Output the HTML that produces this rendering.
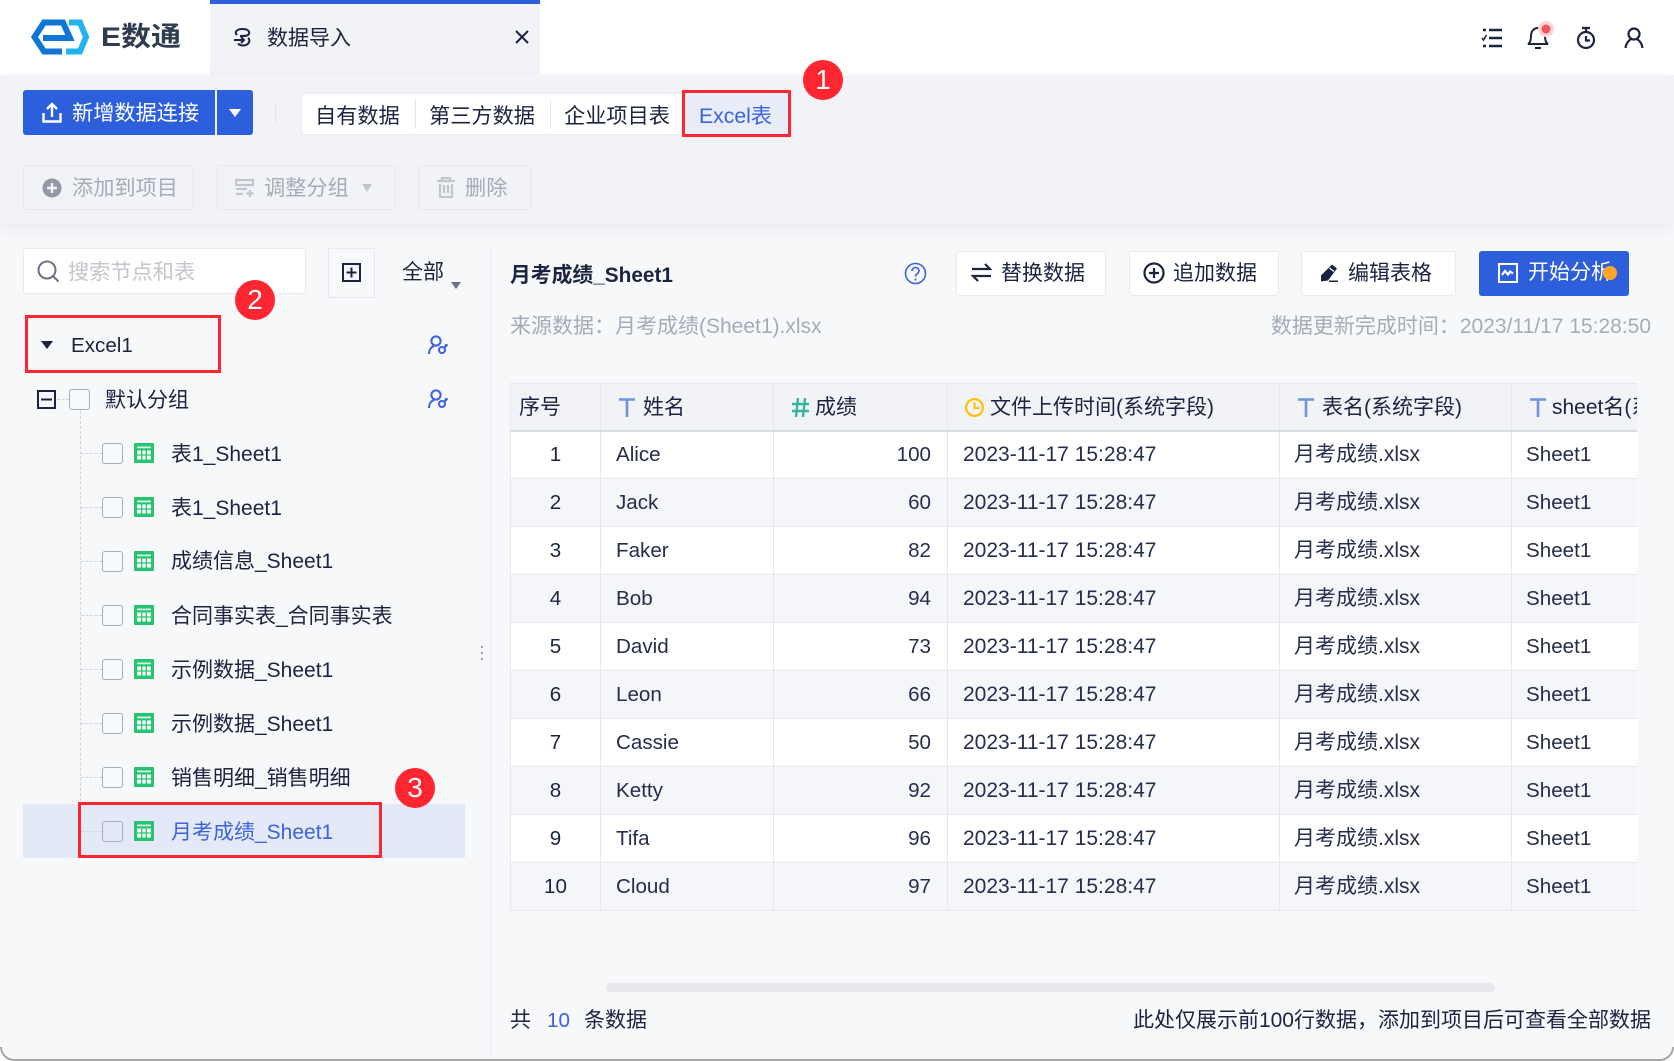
<!DOCTYPE html>
<html lang="zh-CN"><head><meta charset="utf-8"><title>数据导入</title>
<style>
*{box-sizing:border-box}
html,body{margin:0;padding:0;width:1674px;height:1061px;overflow:hidden}
body{position:relative;background:#f7f8fa;font-family:"Liberation Sans","Noto Sans CJK SC",sans-serif;font-size:21px;color:#1c2340}
.t{position:absolute;line-height:30px;white-space:nowrap}
.a{position:absolute}
.btn{position:absolute;background:#fff;border:1px solid #e8eaef;border-radius:3px}
.dis{position:absolute;background:#f2f3f7;border:1px solid #e6e8ee;border-radius:3px}
.g{color:#a6abb8}
.cb{position:absolute;width:21px;height:21px;background:#f8f9fb;border:1px solid #a9adbb;border-radius:3px;left:102px}
.gi{position:absolute;left:134px;width:20px;height:20px}
.red{position:absolute;border:3px solid #ff2631}
.c{position:absolute;width:40px;height:40px;border-radius:50%;background:#ff2631;color:#fff;text-align:center;line-height:40px;font-size:28px}
.dh{position:absolute;left:81px;width:21px;border-top:1px dashed #d0d3da}
table{border-collapse:collapse;table-layout:fixed;width:1300px;font-size:21px;line-height:30px}
td,th{border:1px solid #e6e8ee;height:48px;padding:0 14px;font-weight:normal;white-space:nowrap;overflow:hidden;text-align:left;color:#262c4d}
th{height:47px;padding-top:2px;background:#f2f3f7;color:#1c2340;border-bottom:2px solid #d9dce3}
td:first-child{text-align:center;color:#1c2340;padding:0;font-size:20.6px}
th:first-child{padding:2px 8px 0}
td:nth-child(2){padding-left:15px;font-size:20.6px}
td:nth-child(3){padding-right:16px;font-size:20.6px;text-align:right}
td:nth-child(4){padding-left:15px}
td:nth-child(6){font-size:20.6px}
tr:nth-child(odd) td{background:#fff}
tr:nth-child(even) td{background:#f5f6f9}
th svg{vertical-align:-3px}
</style></head><body>
<svg width="0" height="0" style="position:absolute"><defs>
<g id="grid"><rect width="20" height="20" rx="1" fill="#27c46f"/><rect x="3" y="3.500" width="14" height="1.800" fill="#d8f5e5"/><path d="M3 7.500h14v9H3z" fill="#fff"/><path d="M7.700 7.500v9M12.300 7.500v9M3 12h14" stroke="#27c46f" stroke-width="1.300"/></g>
<g id="pk" fill="none" stroke="#3b63dd" stroke-width="2"><circle cx="8" cy="6" r="4.600"/><path d="M1 19c0-4 2-7 5-8"/><circle cx="14" cy="15" r="3"/><path d="M16 13l3.500-3.500M17 9.500l2 2"/></g>
</defs></svg>

<!-- header -->
<div class="a" style="left:0;top:0;width:1674px;height:75px;background:#fff"></div>
<svg class="a" style="left:30px;top:19px" width="60" height="36" viewBox="0 0 60 36" fill="none"><path d="M32 32.500H14L4.500 18 14 3.500H33L40 19H13" stroke="#0f76d6" stroke-width="6"/><path d="M39 3.500H50L56 18 50 32.500H36" stroke="#22b3ec" stroke-width="6"/></svg>
<div class="t" style="left:101px;top:22px;font-size:27px;font-weight:bold;color:#2f3d4f;transform-origin:0 50%;transform:scaleX(1.11)">E数通</div>
<div class="a" style="left:210px;top:0;width:330px;height:75px;background:#f2f3f7;border-top:4px solid #2d5fdc"></div>
<svg class="a" style="left:233px;top:28px" width="20" height="19" viewBox="0 0 20 19" fill="none" stroke="#1c2340" stroke-width="2"><path d="M4 7C1 4 4 1 9.500 1S18 4 15 7C14 8 12 8 7 8"/><path d="M1 12h10M8 9l3 3-3 3"/><path d="M15 10c3 2 1 7.500-5 7.500-3 0-4-1-5-2"/></svg>
<div class="t" style="left:267px;top:24px">数据导入</div>
<svg class="a" style="left:515px;top:30px" width="14" height="14" viewBox="0 0 14 14" stroke="#1c2340" stroke-width="2"><path d="M1 1l12 12M13 1L1 13"/></svg>

<svg class="a" style="left:1481px;top:27px" width="22" height="22" viewBox="0 0 22 22" fill="none" stroke="#1c2340" stroke-width="2.600"><path d="M8 3h13M8 11h13M8 19h13"/><path d="M2 3h3M2 19h3"/><path d="M1 11l1.500 2L5.500 8" stroke-width="1.600"/></svg>
<svg class="a" style="left:1525px;top:20px" width="32" height="32" viewBox="0 0 32 32" fill="none" stroke="#1c2340" stroke-width="2"><path d="M3 24c2-1 3-3 3-8 0-5 3-8 7-8s7 3 7 8c0 5 1 7 3 8zM10 28h6"/><circle cx="21" cy="9" r="8" fill="#fbd5d7" stroke="none"/><circle cx="21" cy="9" r="4.500" fill="#f2545d" stroke="none"/></svg>
<svg class="a" style="left:1576px;top:26px" width="20" height="24" viewBox="0 0 20 24" fill="none" stroke="#1c2340" stroke-width="2.200"><circle cx="10" cy="14" r="8"/><path d="M6 2h8M10 2v4M10 10v4.500h4"/></svg>
<svg class="a" style="left:1624px;top:27px" width="20" height="22" viewBox="0 0 20 22" fill="none" stroke="#1c2340" stroke-width="2.200"><circle cx="10" cy="7" r="5.500"/><path d="M7 12c-3 2-5 5-5.500 9M13 12c3 2 5 5 5.500 9"/></svg>

<!-- top panel -->
<div class="a" style="left:0;top:75px;width:1674px;height:150px;background:#f2f3f7;box-shadow:0 4px 12px rgba(40,50,80,.07)"></div>
<div class="a" style="left:23px;top:90px;width:192px;height:45px;background:#2d5fdc;border-radius:3px 0 0 3px"></div>
<svg class="a" style="left:42px;top:102px" width="20" height="21" viewBox="0 0 20 21" fill="none" stroke="#fff" stroke-width="2.400"><path d="M1.500 11v8.500h17V11"/><path d="M10 15V2M5 7l5-5 5 5"/></svg>
<div class="t" style="left:72px;top:99px;color:#fff;font-size:21.200px">新增数据连接</div>
<div class="a" style="left:217px;top:90px;width:36px;height:45px;background:#2d5fdc;border-radius:0 3px 3px 0"></div>
<div class="a" style="left:229px;top:109px;width:0;height:0;border:6px solid transparent;border-top:8px solid #fff;border-bottom:0"></div>
<div class="a" style="left:275px;top:102px;width:1px;height:23px;background:#e2e4ea"></div>
<div class="a" style="left:301px;top:93px;width:489px;height:42px;background:#fff;border:1px solid #e8eaef;border-radius:3px"></div>
<div class="a" style="left:415px;top:99px;width:1px;height:30px;background:#e6e8ee"></div>
<div class="a" style="left:550px;top:99px;width:1px;height:30px;background:#e6e8ee"></div>
<div class="t" style="left:315px;top:102px;font-size:21.200px">自有数据</div>
<div class="t" style="left:429px;top:102px;font-size:21.200px">第三方数据</div>
<div class="t" style="left:564px;top:102px;font-size:21.200px">企业项目表</div>
<div class="a" style="left:684px;top:93px;width:105px;height:42px;background:#e8edf9"></div>
<div class="t" style="left:699px;top:102px;color:#3b63dd;font-size:21.200px">Excel表</div>
<div class="red" style="left:682px;top:90px;width:109px;height:47px"></div>
<div class="c" style="left:803px;top:60px">1</div>

<div class="dis" style="left:23px;top:165px;width:171px;height:45px"></div>
<svg class="a" style="left:42px;top:178px" width="20" height="20" viewBox="0 0 20 20"><circle cx="10" cy="10" r="9.500" fill="#9599a6"/><path d="M5 10h10M10 5v10" stroke="#f2f3f7" stroke-width="2.400"/></svg>
<div class="t g" style="left:72px;top:174px;font-size:21.200px">添加到项目</div>
<div class="dis" style="left:217px;top:165px;width:179px;height:45px"></div>
<svg class="a" style="left:235px;top:178px" width="19" height="20" viewBox="0 0 19 20" fill="none" stroke="#c2c5cf" stroke-width="2.200"><path d="M1 2h17v5H1zM1 11h11M1 16h7M15 12v7M11.500 15.500h7"/></svg>
<div class="t g" style="left:264px;top:174px;font-size:21.200px">调整分组</div>
<div class="a" style="left:362px;top:184px;width:0;height:0;border:5px solid transparent;border-top:8px solid #c0c3cc;border-bottom:0"></div>
<div class="dis" style="left:418px;top:165px;width:113px;height:45px"></div>
<svg class="a" style="left:437px;top:177px" width="18" height="21" viewBox="0 0 18 21" fill="none" stroke="#c2c5cf" stroke-width="2.200"><path d="M0 4h18M5 4V1h8v3M3 7v13h12V7M7 8v8M11 8v8"/></svg>
<div class="t g" style="left:465px;top:174px;font-size:21.200px">删除</div>

<!-- left pane -->
<div class="a" style="left:490px;top:248px;width:1px;height:813px;background:#ebedf1"></div>
<div class="btn" style="left:23px;top:248px;width:283px;height:46px"></div>
<svg class="a" style="left:37px;top:260px" width="23" height="23" viewBox="0 0 23 23" fill="none" stroke="#6c7283" stroke-width="2"><circle cx="10" cy="10" r="8.500"/><path d="M16 16l5.500 5.500"/></svg>
<div class="t" style="left:68px;top:258px;color:#c3c6d0;font-size:21.200px">搜索节点和表</div>
<div class="a" style="left:328px;top:248px;width:47px;height:50px;border:1px solid #e6e8ee;background:#f7f8fa"></div>
<svg class="a" style="left:342px;top:263px" width="19" height="19" viewBox="0 0 19 19" fill="none" stroke="#1c2340" stroke-width="2"><path d="M1 1h17v17H1zM4.500 9.500h10M9.500 4.500v10"/></svg>
<div class="t" style="left:402px;top:258px">全部</div>
<div class="a" style="left:451px;top:282px;width:0;height:0;border:5px solid transparent;border-top:7px solid #6c7283;border-bottom:0"></div>

<div class="a" style="left:41px;top:341px;width:0;height:0;border:6px solid transparent;border-top:8px solid #1c2340;border-bottom:0"></div>
<div class="t" style="left:71px;top:331px;font-size:20.600px">Excel1</div>
<svg class="a" style="left:428px;top:335px" width="20" height="20" viewBox="0 0 20 20"><use href="#pk"/></svg>
<div class="red" style="left:25px;top:315px;width:196px;height:58px"></div>
<div class="c" style="left:235px;top:280px">2</div>

<svg class="a" style="left:37px;top:390px" width="19" height="19" viewBox="0 0 19 19" fill="none" stroke="#1c2340" stroke-width="2"><path d="M1 1h17v17H1zM4 9.500h11"/></svg>
<div class="dh" style="left:57px;top:399px;width:12px"></div>
<div class="cb" style="left:69px;top:389px"></div>
<div class="t" style="left:105px;top:386px">默认分组</div>
<svg class="a" style="left:428px;top:389px" width="20" height="20" viewBox="0 0 20 20"><use href="#pk"/></svg>
<div class="a" style="left:80px;top:411px;height:420px;border-left:1px dashed #d0d3da"></div>

<div class="a" style="left:23px;top:804px;width:442px;height:54px;background:#e3e9f6"></div>

<div class="dh" style="top:453px"></div><div class="cb" style="top:443px"></div><svg class="gi" style="top:443px"><use href="#grid"/></svg><div class="t" style="left:171px;top:440px">表1_Sheet1</div>
<div class="dh" style="top:507px"></div><div class="cb" style="top:497px"></div><svg class="gi" style="top:497px"><use href="#grid"/></svg><div class="t" style="left:171px;top:494px">表1_Sheet1</div>
<div class="dh" style="top:561px"></div><div class="cb" style="top:551px"></div><svg class="gi" style="top:551px"><use href="#grid"/></svg><div class="t" style="left:171px;top:547px">成绩信息_Sheet1</div>
<div class="dh" style="top:615px"></div><div class="cb" style="top:605px"></div><svg class="gi" style="top:605px"><use href="#grid"/></svg><div class="t" style="left:171px;top:602px">合同事实表_合同事实表</div>
<div class="dh" style="top:669px"></div><div class="cb" style="top:659px"></div><svg class="gi" style="top:659px"><use href="#grid"/></svg><div class="t" style="left:171px;top:656px">示例数据_Sheet1</div>
<div class="dh" style="top:723px"></div><div class="cb" style="top:713px"></div><svg class="gi" style="top:713px"><use href="#grid"/></svg><div class="t" style="left:171px;top:710px">示例数据_Sheet1</div>
<div class="dh" style="top:777px"></div><div class="cb" style="top:767px"></div><svg class="gi" style="top:767px"><use href="#grid"/></svg><div class="t" style="left:171px;top:764px">销售明细_销售明细</div>
<div class="dh" style="top:831px"></div><div class="cb" style="top:821px;background:#e3e9f6"></div><svg class="gi" style="top:821px"><use href="#grid"/></svg><div class="t" style="left:171px;top:818px;color:#3b63dd">月考成绩_Sheet1</div>
<div class="red" style="left:78px;top:802px;width:304px;height:56px"></div>
<div class="c" style="left:395px;top:768px">3</div>
<div class="a" style="left:481px;top:646px;width:2px;height:2px;background:#9a9fad;box-shadow:0 6px 0 #9a9fad,0 12px 0 #9a9fad"></div>

<!-- right pane -->
<div class="t" style="left:510px;top:261px;font-weight:bold;color:#1c2340;font-size:20.800px">月考成绩_Sheet1</div>
<svg class="a" style="left:904px;top:262px" width="23" height="23" viewBox="0 0 23 23" fill="none" stroke="#3b63dd" stroke-width="1.600"><circle cx="11.500" cy="11.500" r="10"/><path d="M8 9c0-2 1.500-3.500 3.500-3.500S15 7 15 9c0 2.500-3.500 3-3.500 5.500M11.500 16.500v2"/></svg>

<div class="btn" style="left:956px;top:251px;width:150px;height:45px"></div>
<svg class="a" style="left:971px;top:262px" width="21" height="21" viewBox="0 0 21 21" fill="none" stroke="#1c2340" stroke-width="2.200"><path d="M1 7h18L14 2M20 14H2l5 5"/></svg>
<div class="t" style="left:1001px;top:259px">替换数据</div>
<div class="btn" style="left:1129px;top:251px;width:150px;height:45px"></div>
<svg class="a" style="left:1143px;top:262px" width="22" height="22" viewBox="0 0 22 22" fill="none" stroke="#1c2340" stroke-width="2.200"><circle cx="11" cy="11" r="9.500"/><path d="M6 11h10M11 6v10"/></svg>
<div class="t" style="left:1173px;top:259px">追加数据</div>
<div class="btn" style="left:1301px;top:251px;width:155px;height:45px"></div>
<svg class="a" style="left:1320px;top:264px" width="19" height="19" viewBox="0 0 19 19" fill="#1c2340"><path d="M12 .5l5 4-9 12-7 1 0-6z"/><path d="M9.500 4l4.500 3.500" stroke="#fff" stroke-width="1.300"/><path d="M9 16.500h9V18H9z"/></svg>
<div class="t" style="left:1348px;top:259px">编辑表格</div>
<div class="a" style="left:1479px;top:251px;width:150px;height:45px;background:#2d5fdc;border-radius:3px"></div>
<svg class="a" style="left:1498px;top:263px" width="20" height="20" viewBox="0 0 20 20" fill="none" stroke="#fff" stroke-width="2"><path d="M1 1h18v18H1z"/><path d="M4 12l3-4 3 3.500 2-3 3 2" stroke-width="2.200"/></svg>
<div class="t" style="left:1528px;top:258px;color:#fff">开始分析</div>
<div class="a" style="left:1603px;top:266px;width:14px;height:14px;border-radius:50%;background:#ffa62b"></div>

<div class="t g" style="left:510px;top:312px">来源数据：月考成绩(Sheet1).xlsx</div>
<div class="t g" style="right:23px;top:312px">数据更新完成时间：2023/11/17 15:28:50</div>

<div class="a" style="left:510px;top:383px;width:1127px;height:529px;overflow:hidden">
<table>
<colgroup><col style="width:90px"><col style="width:173px"><col style="width:174px"><col style="width:332px"><col style="width:232px"><col style="width:299px"></colgroup>
<thead><tr>
<th>序号</th>
<th style="padding-left:18px"><svg width="16" height="19" viewBox="0 0 16 19" fill="none" stroke="#6d94de" stroke-width="2.600" style="margin-right:8px"><path d="M0 1.500h16M8 1.500V19"/></svg>姓名</th>
<th style="padding-left:18px"><svg width="17" height="19" viewBox="0 0 17 19" fill="none" stroke="#36b5a4" stroke-width="2.400" style="margin-right:6px"><path d="M6 0L4 19M13 0l-2 19M0 6h17M0 13h17"/></svg>成绩</th>
<th style="padding-left:17px"><svg width="19" height="19" viewBox="0 0 19 19" fill="none" stroke="#ffc107" stroke-width="2.200" style="margin-right:6px"><circle cx="9.500" cy="9.500" r="8.400"/><path d="M9.500 4.500v5.500h5"/></svg>文件上传时间(系统字段)</th>
<th style="padding-left:18px"><svg width="16" height="19" viewBox="0 0 16 19" fill="none" stroke="#6d94de" stroke-width="2.600" style="margin-right:8px"><path d="M0 1.500h16M8 1.500V19"/></svg>表名(系统字段)</th>
<th style="padding-left:18px"><svg width="16" height="19" viewBox="0 0 16 19" fill="none" stroke="#6d94de" stroke-width="2.600" style="margin-right:6px"><path d="M0 1.500h16M8 1.500V19"/></svg>sheet名(系统字段)</th>
</tr></thead>
<tbody>
<tr><td>1</td><td>Alice</td><td>100</td><td>2023-11-17 15:28:47</td><td>月考成绩.xlsx</td><td>Sheet1</td></tr>
<tr><td>2</td><td>Jack</td><td>60</td><td>2023-11-17 15:28:47</td><td>月考成绩.xlsx</td><td>Sheet1</td></tr>
<tr><td>3</td><td>Faker</td><td>82</td><td>2023-11-17 15:28:47</td><td>月考成绩.xlsx</td><td>Sheet1</td></tr>
<tr><td>4</td><td>Bob</td><td>94</td><td>2023-11-17 15:28:47</td><td>月考成绩.xlsx</td><td>Sheet1</td></tr>
<tr><td>5</td><td>David</td><td>73</td><td>2023-11-17 15:28:47</td><td>月考成绩.xlsx</td><td>Sheet1</td></tr>
<tr><td>6</td><td>Leon</td><td>66</td><td>2023-11-17 15:28:47</td><td>月考成绩.xlsx</td><td>Sheet1</td></tr>
<tr><td>7</td><td>Cassie</td><td>50</td><td>2023-11-17 15:28:47</td><td>月考成绩.xlsx</td><td>Sheet1</td></tr>
<tr><td>8</td><td>Ketty</td><td>92</td><td>2023-11-17 15:28:47</td><td>月考成绩.xlsx</td><td>Sheet1</td></tr>
<tr><td>9</td><td>Tifa</td><td>96</td><td>2023-11-17 15:28:47</td><td>月考成绩.xlsx</td><td>Sheet1</td></tr>
<tr><td>10</td><td>Cloud</td><td>97</td><td>2023-11-17 15:28:47</td><td>月考成绩.xlsx</td><td>Sheet1</td></tr>
</tbody></table></div>

<div class="a" style="left:606px;top:983px;width:889px;height:9px;background:#e8e9ed;border-radius:4px"></div>
<div class="t" style="left:510px;top:1006px">共</div>
<div class="t" style="left:547px;top:1006px;color:#3b63dd;font-size:20.600px">10</div>
<div class="t" style="left:584px;top:1006px">条数据</div>
<div class="t" style="right:23px;top:1006px">此处仅展示前100行数据，添加到项目后可查看全部数据</div>
<div class="a" style="left:0;top:1059px;width:1674px;height:2px;background:#a5a5a5"></div>
<svg class="a" style="left:1660px;top:1047px" width="14" height="14" viewBox="0 0 14 14"><path d="M14 0v14H0v-1.500C7 12.500 12.500 7 12.500 0z" fill="#fff"/><path d="M13 0C13 7 7 13 0 13" fill="none" stroke="#a5a5a5" stroke-width="2"/></svg>
<svg class="a" style="left:0;top:1047px" width="14" height="14" viewBox="0 0 14 14"><path d="M0 0v14h14v-1.500C7 12.500 1.500 7 1.500 0z" fill="#fff"/><path d="M1 0C1 7 7 13 14 13" fill="none" stroke="#a5a5a5" stroke-width="2"/></svg>
</body></html>
